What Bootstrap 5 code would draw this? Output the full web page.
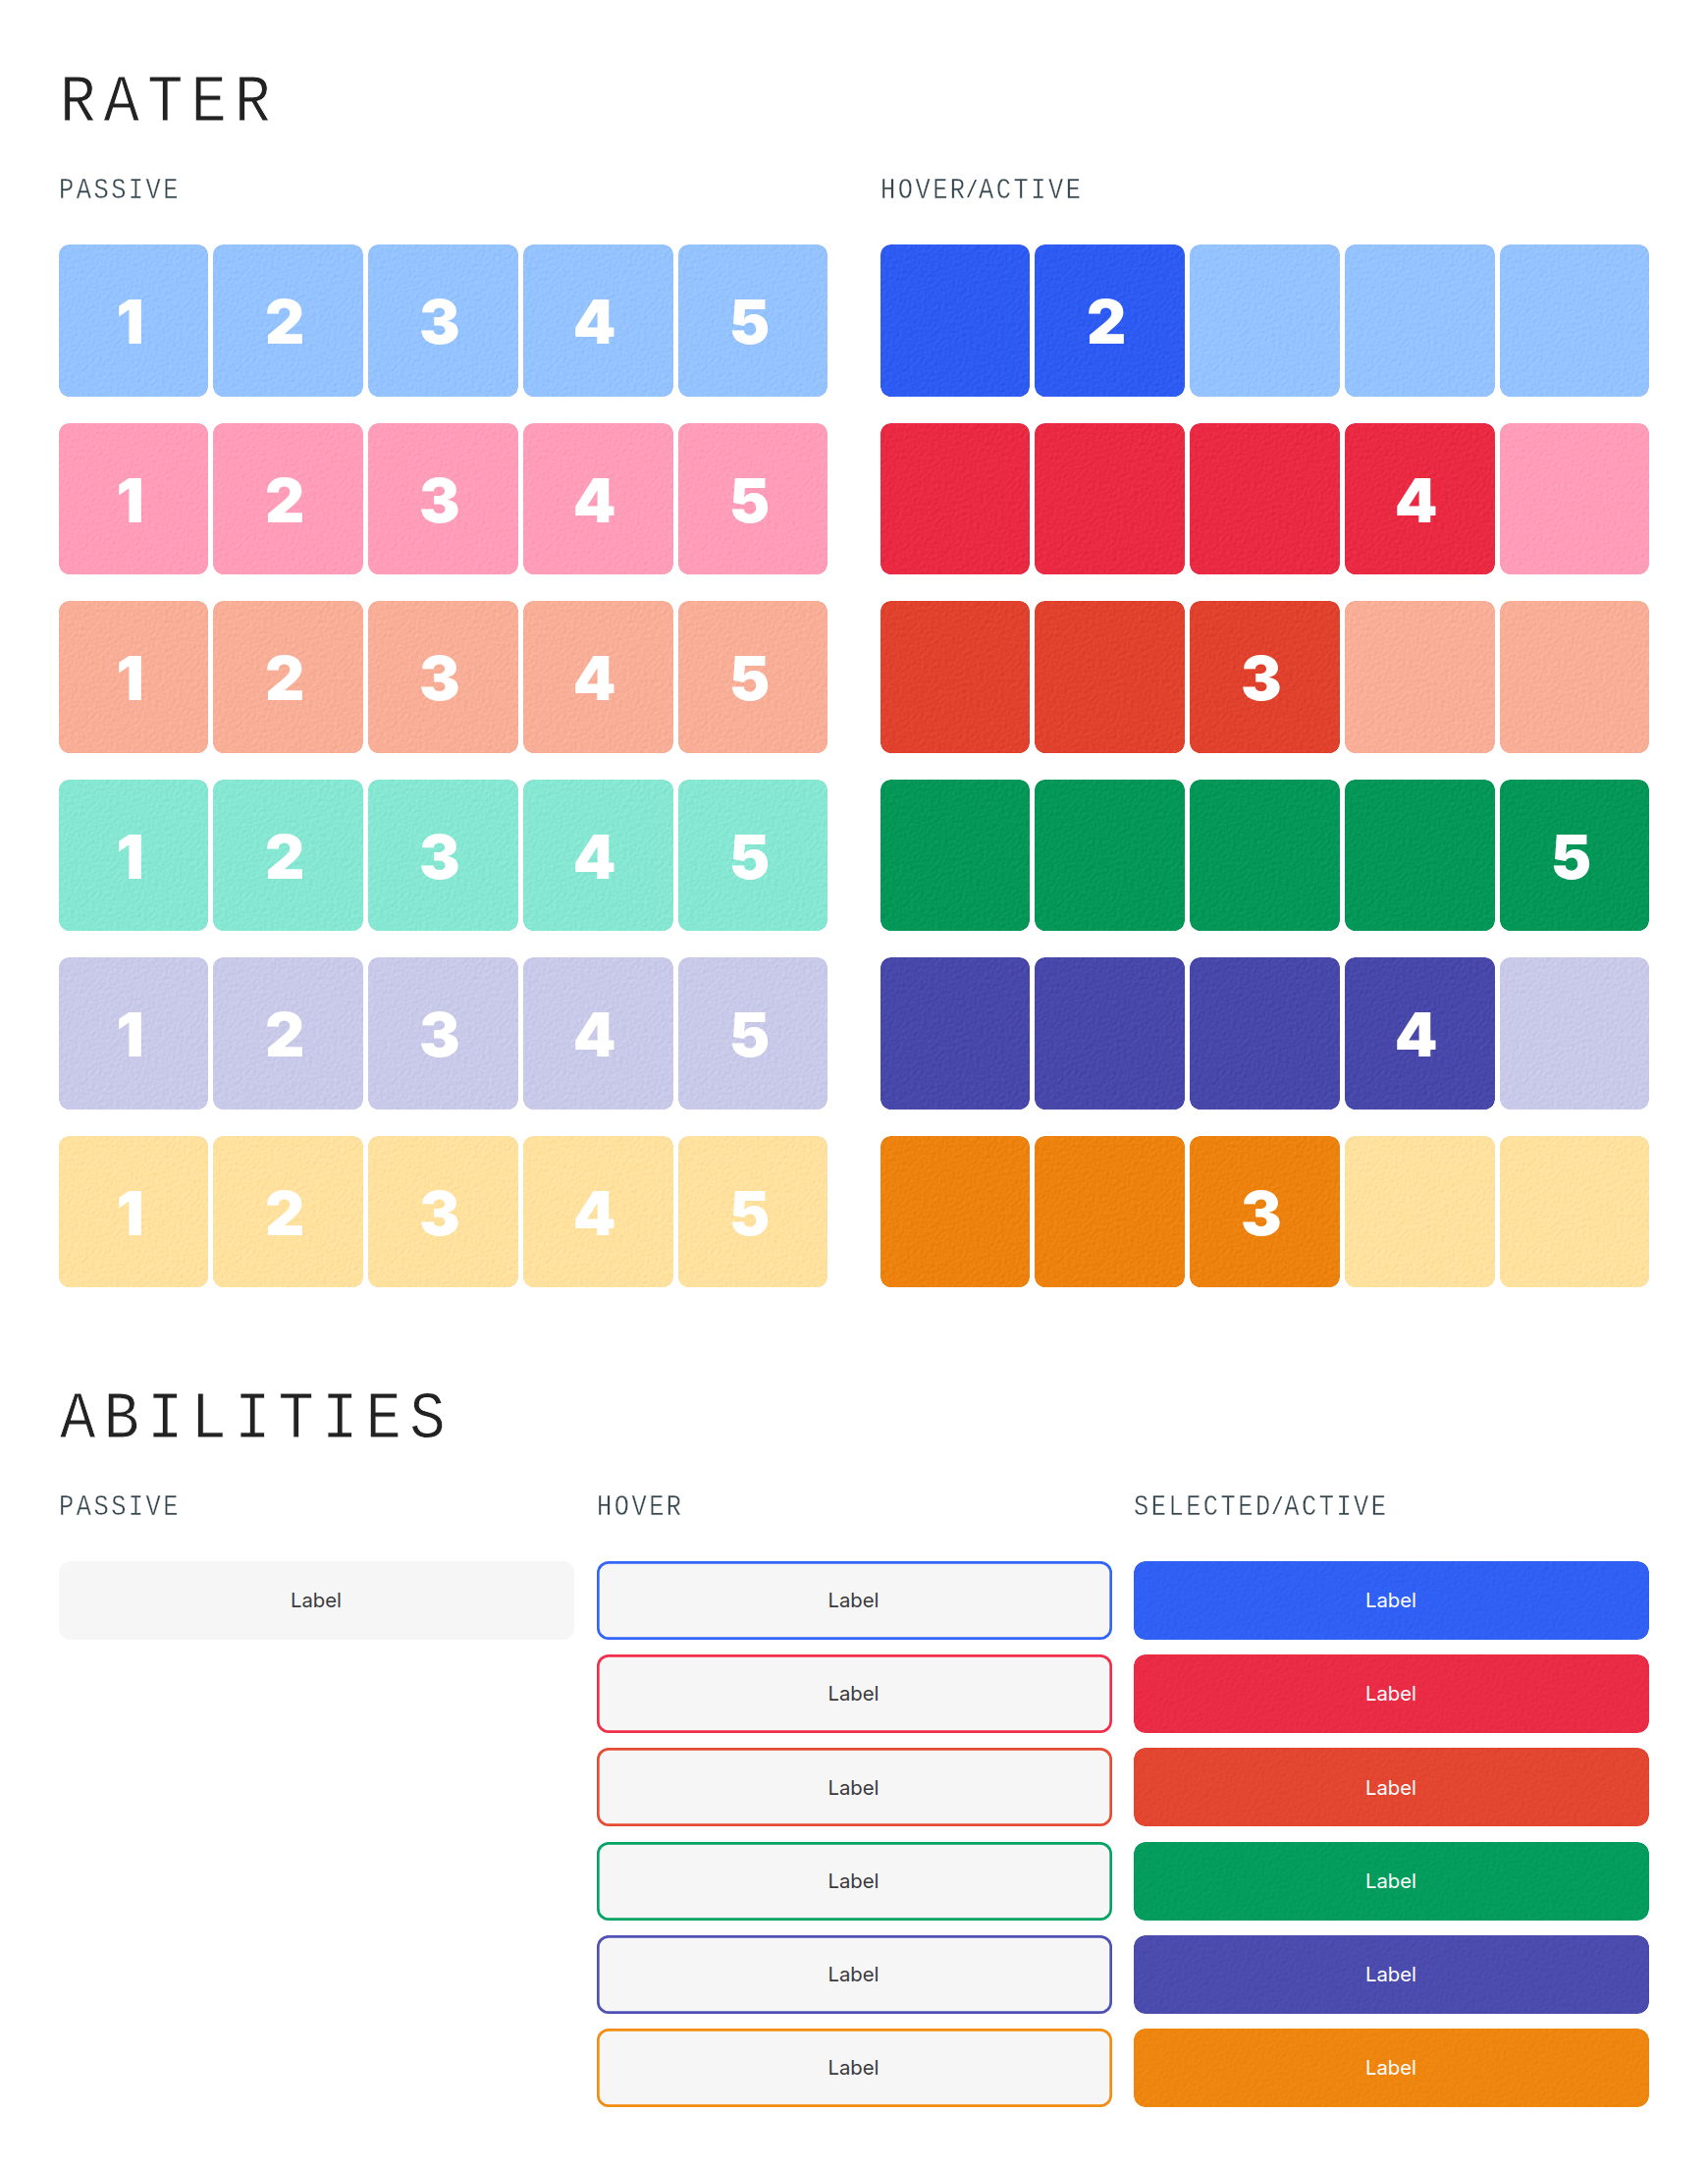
<!DOCTYPE html>
<html lang="en">
<head>
<meta charset="utf-8">
<meta name="viewport" content="width=device-width, initial-scale=1">
<title>Rater and abilities</title>
<link href="https://cdn.jsdelivr.net/npm/bootstrap@5.3.0/dist/css/bootstrap.min.css" rel="stylesheet">
<style>
  body { font-family: Inter, "Liberation Sans", sans-serif; background: #fff; color: #333; }
  .sheet { padding: 67px 60px 56px; }
  .display-title { font: 400 69px/76px "Liberation Mono", monospace; letter-spacing: 9.2px; color: #222; -webkit-text-stroke: .8px #fff; margin: 0; padding-left: 1px; transform: scaleX(.88); transform-origin: 0 50%; }
  .state-title { font: 400 28.8px/32px "Liberation Mono", monospace; letter-spacing: 2.85px; color: #37474f; -webkit-text-stroke: .4px #fff; margin: 36px 0 38px; transform: scaleX(.88); transform-origin: 0 50%; white-space: nowrap; }
  .slash { font-size: 23px; line-height: 1; margin: 0 -1.8px; vertical-align: 1px; -webkit-text-stroke: 0; }
  .rater-cols { display: grid; grid-template-columns: 1fr 1fr; column-gap: 54px; }
  .rater-list { gap: 26.85px; }
  .rater { display: grid; grid-template-columns: 152fr 153.3fr 152fr 153.3fr 152fr; column-gap: 5.08px; }
  .tile { height: 154.667px; padding: 4px 7px 0 0; font-weight: 900; font-size: 62.4px; line-height: 1; color: #fff; }
  .abilities { padding-top: 96.8px; }
  .ability-cols { display: grid; grid-template-columns: repeat(3, 1fr); column-gap: 22.5px; }
  .ability-list { gap: 15.2px; }
  .ability { height: 80px; padding: 1px 1px 0 0; border-radius: 12px; font-size: 20.3px; font-weight: 430; line-height: 1; background: #f6f6f6; color: #3a3a3d; }
  .outlined { box-shadow: inset 0 0 0 2.667px var(--line); }
  .paper { position: relative; isolation: isolate; }
  .paper::before { content: ""; position: absolute; inset: 0; z-index: -1; border-radius: 10.667px; background: var(--soft); filter: url(#paper-grain); }
  .paper.on::before { background: var(--strong); }
  .ability.paper { background: none; color: #fff; }
  .ability.paper::before { border-radius: 12px; background: var(--wide); filter: url(#fine-grain); }
  .blue { --soft: #93c2ff; --strong: #2d5af1; --wide: #2f5ff3; --line: #3366f8; }
  .pink { --soft: #ff9cb8; --strong: #e92842; --wide: #ea2b45; --line: #f22e4b; }
  .coral { --soft: #f8ae96; --strong: #e0412d; --wide: #e24530; --line: #e64c33; }
  .green { --soft: #85e7d2; --strong: #049657; --wide: #049c5c; --line: #06a366; }
  .violet { --soft: #c8c9e8; --strong: #4647a8; --wide: #4a4bac; --line: #5051b5; }
  .amber { --soft: #ffe09d; --strong: #ed810e; --wide: #ee850f; --line: #f28c12; }
</style>
<script src="https://cdn.jsdelivr.net/npm/bootstrap@5.3.0/dist/js/bootstrap.bundle.min.js"></script>
</head>
<body>
<svg class="position-absolute" width="0" height="0" aria-hidden="true">
  <filter id="paper-grain" x="0" y="0" width="100%" height="100%" color-interpolation-filters="sRGB">
    <feTurbulence type="fractalNoise" baseFrequency="0.28" numOctaves="3" seed="7" result="noise"/>
    <feDiffuseLighting in="noise" surfaceScale="1" diffuseConstant="1" lighting-color="#fff" result="light">
      <feDistantLight azimuth="225" elevation="45"/>
    </feDiffuseLighting>
    <feComposite in="SourceGraphic" in2="light" operator="arithmetic" k1="0" k2="1" k3="0.11" k4="-0.074"/>
    <feComposite in2="SourceGraphic" operator="in"/>
  </filter>
  <filter id="fine-grain" x="0" y="0" width="100%" height="100%" color-interpolation-filters="sRGB">
    <feTurbulence type="fractalNoise" baseFrequency="0.28" numOctaves="3" seed="3" result="noise"/>
    <feDiffuseLighting in="noise" surfaceScale="1" diffuseConstant="1" lighting-color="#fff" result="light">
      <feDistantLight azimuth="225" elevation="45"/>
    </feDiffuseLighting>
    <feComposite in="SourceGraphic" in2="light" operator="arithmetic" k1="0" k2="1" k3="0.07" k4="-0.047"/>
    <feComposite in2="SourceGraphic" operator="in"/>
  </filter>
</svg>
<main class="sheet">
  <section>
    <h1 class="display-title">RATER</h1>
    <div class="rater-cols">
      <div>
        <h2 class="state-title">PASSIVE</h2>
        <div class="rater-list d-flex flex-column" id="rater-passive"></div>
      </div>
      <div>
        <h2 class="state-title">HOVER<span class="slash">/</span>ACTIVE</h2>
        <div class="rater-list d-flex flex-column" id="rater-active"></div>
      </div>
    </div>
  </section>
  <section class="abilities">
    <h1 class="display-title">ABILITIES</h1>
    <div class="ability-cols">
      <div>
        <h2 class="state-title">PASSIVE</h2>
        <div class="ability-list d-flex flex-column">
          <div class="ability d-flex align-items-center justify-content-center">Label</div>
        </div>
      </div>
      <div>
        <h2 class="state-title">HOVER</h2>
        <div class="ability-list d-flex flex-column" id="ability-hover"></div>
      </div>
      <div>
        <h2 class="state-title">SELECTED<span class="slash">/</span>ACTIVE</h2>
        <div class="ability-list d-flex flex-column" id="ability-selected"></div>
      </div>
    </div>
  </section>
</main>
<script>
  const scores = { blue: 2, pink: 4, coral: 3, green: 5, violet: 4, amber: 3 };
  const add = (id, html) => document.getElementById(id).insertAdjacentHTML('beforeend', html);
  const tile = (on, text) => `<div class="tile paper ${on ? 'on' : ''} d-flex align-items-center justify-content-center">${text}</div>`;
  const steps = [1, 2, 3, 4, 5];
  for (const [hue, score] of Object.entries(scores)) {
    add('rater-passive', `<div class="rater ${hue}">${steps.map(n => tile(false, n)).join('')}</div>`);
    add('rater-active', `<div class="rater ${hue}">${steps.map(n => tile(n <= score, n === score ? n : '')).join('')}</div>`);
    add('ability-hover', `<div class="ability outlined ${hue} d-flex align-items-center justify-content-center">Label</div>`);
    add('ability-selected', `<div class="ability paper on ${hue} d-flex align-items-center justify-content-center">Label</div>`);
  }
</script>
</body>
</html>
